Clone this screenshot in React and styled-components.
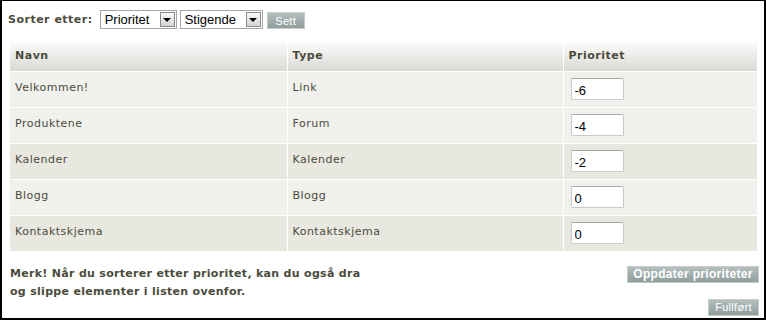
import React, { useState } from "react";
import styled, { createGlobalStyle } from "styled-components";

const GlobalStyle = createGlobalStyle`
  html, body {
    margin: 0;
    padding: 0;
    background: #fff;
  }
`;

const Frame = styled.div`
  box-sizing: border-box;
  width: 766px;
  height: 320px;
  border-top: 1px solid #000;
  border-left: 2px solid #000;
  border-right: 2px solid #000;
  border-bottom: 2px solid #000;
  padding: 9px 6px 0 6px;
  font-family: "DejaVu Sans", Verdana, sans-serif;
  color: #4b4b3c;
`;

const SortBar = styled.div`
  display: flex;
  align-items: center;
  height: 19px;
`;

const SortLabel = styled.span`
  font-size: 11px;
  font-weight: bold;
  margin-right: 7px;
  letter-spacing: 0.5px;
`;

const SelectBox = styled.div`
  box-sizing: border-box;
  display: flex;
  align-items: center;
  width: ${p => p.width}px;
  height: 19px;
  border: 1px solid #a5a5a5;
  background: #fff;
  margin-right: 3px;
  padding: 1px;
`;

const SelectText = styled.span`
  flex: 1;
  font-family: "Liberation Sans", Arial, sans-serif;
  font-size: 13px;
  color: #000;
  padding-left: 3px;
  line-height: 15px;
`;

const SelectArrow = styled.span`
  box-sizing: border-box;
  width: 15px;
  height: 15px;
  border: 1px solid #8a8a8a;
  background: linear-gradient(#fafafa, #d4d4d4);
  display: flex;
  align-items: center;
  justify-content: center;
  &::after {
    content: "";
    border-left: 4px solid transparent;
    border-right: 4px solid transparent;
    border-top: 4px solid #000;
    margin-top: 1px;
  }
`;

const GreyButton = styled.button`
  box-sizing: border-box;
  height: 17px;
  width: ${p => p.w}px;
  padding: 0;
  border: 1px solid #c4cccc;
  background: linear-gradient(#b4bfbf, #8f9d9d);
  color: #fff;
  font-family: "Liberation Sans", Tahoma, sans-serif;
  font-size: ${p => (p.bold ? "12px" : "11px")};
  font-weight: ${p => (p.bold ? "bold" : "normal")};
  line-height: 14px;
  white-space: nowrap;
  text-align: center;
  cursor: pointer;
  letter-spacing: 0.3px;
`;

const Table = styled.table`
  width: 747px;
  margin: 13px 0 0 2px;
  border-collapse: collapse;
  font-size: 11px;
  letter-spacing: 0.5px;
`;

const HeadCell = styled.th`
  box-sizing: border-box;
  height: 29px;
  padding: 0 0 1px 5px;
  text-align: left;
  font-weight: bold;
  color: #4b4b3c;
  background: linear-gradient(#fbfbfa, #d9d9d5);
  border-right: 1px solid #fff;
  border-bottom: 1px solid #fff;
  width: ${p => p.w}px;
  &:last-child {
    border-right: none;
  }
`;

const Row = styled.tr`
  background: ${p => (p.dark ? "#e8e7e0" : "#f0f0ec")};
`;

const Cell = styled.td`
  box-sizing: border-box;
  height: 36px;
  padding: 0 0 3px 5px;
  vertical-align: middle;
  color: #4b4b3c;
  border-right: 1px solid #fff;
  border-bottom: 1px solid #fff;
  &:last-child {
    border-right: none;
    padding-bottom: 0;
  }
`;

const PrioInput = styled.input`
  box-sizing: border-box;
  display: block;
  width: 53px;
  height: 22px;
  margin: 0 0 0 2px;
  border: 1px solid #c9c9c9;
  border-top-color: #a8a8a8;
  border-radius: 2px;
  background: #fff;
  padding: 2px 3px 0;
  font-family: "Liberation Sans", Arial, sans-serif;
  font-size: 13px;
  color: #000;
  outline: none;
`;

const Footer = styled.div`
  display: flex;
  justify-content: space-between;
  align-items: flex-start;
  margin: 13px 0 0 2px;
  width: 749px;
`;

const Note = styled.p`
  margin: 0;
  font-size: 11px;
  font-weight: bold;
  line-height: 18px;
  letter-spacing: 0.3px;
`;

const Actions = styled.div`
  display: flex;
  flex-direction: column;
  align-items: flex-end;
  gap: 16px;
  padding-top: 1px;
`;

const items = [
  { name: "Velkommen!", type: "Link", prio: "-6", dark: false },
  { name: "Produktene", type: "Forum", prio: "-4", dark: false },
  { name: "Kalender", type: "Kalender", prio: "-2", dark: true },
  { name: "Blogg", type: "Blogg", prio: "0", dark: false },
  { name: "Kontaktskjema", type: "Kontaktskjema", prio: "0", dark: true }
];

const App = () => {
  const [rows, setRows] = useState(items);

  return (
    <Frame>
      <GlobalStyle />
      <SortBar>
        <SortLabel>Sorter etter:</SortLabel>
        <SelectBox width={77}>
          <SelectText>Prioritet</SelectText>
          <SelectArrow />
        </SelectBox>
        <SelectBox width={83}>
          <SelectText>Stigende</SelectText>
          <SelectArrow />
        </SelectBox>
        <GreyButton w={38} style={{ marginLeft: 1, marginTop: 2 }}>
          Sett
        </GreyButton>
      </SortBar>

      <Table>
        <thead>
          <tr>
            <HeadCell w={277}>Navn</HeadCell>
            <HeadCell w={276}>Type</HeadCell>
            <HeadCell>Prioritet</HeadCell>
          </tr>
        </thead>
        <tbody>
          {rows.map((r, i) => (
            <Row key={r.name} dark={r.dark}>
              <Cell>{r.name}</Cell>
              <Cell>{r.type}</Cell>
              <Cell>
                <PrioInput
                  value={r.prio}
                  onChange={e => {
                    const next = [...rows];
                    next[i] = { ...r, prio: e.target.value };
                    setRows(next);
                  }}
                />
              </Cell>
            </Row>
          ))}
        </tbody>
      </Table>

      <Footer>
        <Note>
          Merk! Når du sorterer etter prioritet, kan du også dra
          <br />
          og slippe elementer i listen ovenfor.
        </Note>
        <Actions>
          <GreyButton bold w={132}>Oppdater prioriteter</GreyButton>
          <GreyButton w={51}>Fullført</GreyButton>
        </Actions>
      </Footer>
    </Frame>
  );
};

export default App;
